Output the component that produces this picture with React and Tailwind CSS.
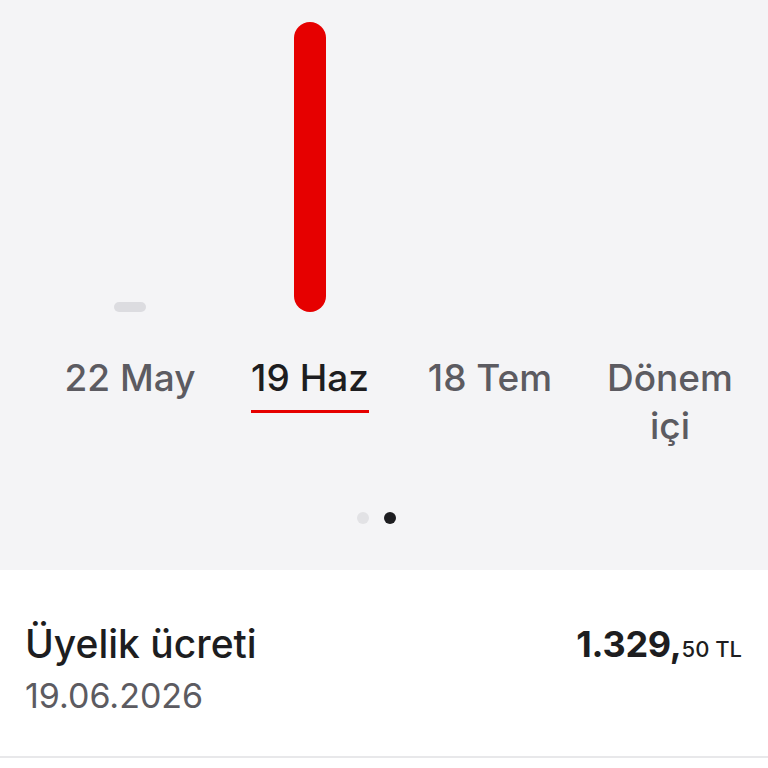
const columns = [
  { label: '22 May', bar: 10, color: 'bg-[#dcdce0]' },
  { label: '19 Haz', bar: 290, color: 'bg-[#e60000]', active: true },
  { label: '18 Tem', bar: 0 },
  { label: 'Dönem içi', bar: 0 },
];

export default function App() {
  return (
    <div className="min-h-[768px] bg-white font-['Inter',sans-serif]">
      <div className="h-[570px] bg-[#f4f4f6] pt-[22px]">
        <div className="grid grid-cols-4 pl-10 pr-2">
          {columns.map((col) => (
            <div key={col.label} className="flex flex-col items-center">
              <div className="flex h-[290px] items-end">
                {col.bar > 0 && (
                  <div className={`w-8 rounded-full ${col.color}`} style={{ height: col.bar }} />
                )}
              </div>
              <div className="mt-[42px] text-center text-[37px] font-medium leading-[48px]">
                {col.active ? (
                  <span className="inline-block border-b-[3px] border-[#e60000] pb-[8px] text-[#1d1d20]">
                    {col.label}
                  </span>
                ) : (
                  <span className="block max-w-[160px] text-[#5c5b61]">{col.label}</span>
                )}
              </div>
            </div>
          ))}
        </div>
        <div className="mt-[62px] flex justify-center gap-[15px] pr-[15px]">
          <span className="h-3 w-3 rounded-full bg-[#e2e2e5]" />
          <span className="h-3 w-3 rounded-full bg-[#1d1d20]" />
        </div>
      </div>
      <div className="flex h-[188px] items-start justify-between border-b-2 border-[#e8e8ea] px-[25px] pt-[52px]">
        <div>
          <div className="text-[39px] font-medium leading-[44px] text-[#1d1d20]">Üyelik ücreti</div>
          <div className="mt-[10px] text-[34px] leading-[40px] text-[#5c5b61]">19.06.2026</div>
        </div>
        <div className="pr-[1px] leading-[44px] text-[#1d1d20]">
          <span className="text-[36px] font-bold tracking-[-0.3px]">1.329,</span>
          <span className="text-[22px] font-medium">50 TL</span>
        </div>
      </div>
    </div>
  );
}
